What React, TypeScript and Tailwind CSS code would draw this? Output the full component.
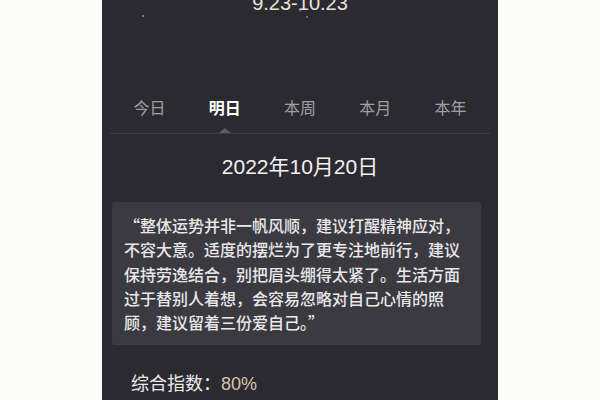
const font = { fontFamily: '"Liberation Sans", "Noto Sans CJK SC", sans-serif' };
const cjk = { fontFamily: '"Noto Sans CJK SC", sans-serif' };

const tabs = ['今日', '明日', '本周', '本月', '本年'];

const lines = [
  '“整体运势并非一帆风顺，建议打醒精神应对，',
  '不容大意。适度的摆烂为了更专注地前行，建议',
  '保持劳逸结合，别把眉头绷得太紧了。生活方面',
  '过于替别人着想，会容易忽略对自己心情的照',
  '顾，建议留着三份爱自己。”',
];

export default function App() {
  return (
    <div className="w-[600px] h-[400px] bg-[#fdfdf8] flex justify-center overflow-hidden" style={font}>
      <div className="relative w-[396px] h-[400px] bg-[#2b2a30] flex flex-col">
        {/* stars */}
        <span className="absolute left-[40px] top-[15px] w-[2px] h-[2px] rounded-full bg-[#8a8890]" />
        <span className="absolute left-[197px] top-[9px] w-[2px] h-[2px] rounded-full bg-[#a09ea6]" />
        <span className="absolute left-[204px] top-[16px] w-[2px] h-[2px] rounded-full bg-[#8a8890]" />

        <div className="mt-[-7px] h-[20px] leading-[20px] text-[20px] text-center text-[#e9e0d6]">9.23-10.23</div>

        {/* tabs */}
        <div className="mt-[82px] mx-[10px] grid grid-cols-5 text-[16px] leading-[24px]" style={cjk}>
          {tabs.map((t, i) => (
            <div key={t} className={i === 1 ? 'text-center text-white font-bold' : 'text-center text-[#a09fa4]'}>
              {t}
            </div>
          ))}
        </div>
        <div className="relative mt-[3px] mx-[8px] h-[12px]">
          <div className="absolute left-[109px] bottom-[1px] w-0 h-0 border-l-[6px] border-r-[6px] border-b-[5px] border-l-transparent border-r-transparent border-b-[#5a5960]" />
          <div className="absolute left-0 right-0 bottom-0 h-px bg-[#3e3d43]" />
        </div>

        <div className="mt-[21px] text-[21px] leading-[24px] text-center text-[#f2f2f2]">2022年10月20日</div>

        <div
          className="mt-[23px] ml-[10px] w-[369px] rounded-[3px] bg-[#3b3a40] pl-[12px] py-[11px] text-[16px] leading-[24.3px] font-medium text-[#e8e8ea]"
          style={cjk}
        >
          {lines.map((l) => (
            <div key={l} className="whitespace-nowrap">{l}</div>
          ))}
        </div>

        <div className="mt-[25px] ml-[29px] text-[18px] leading-[24px] text-[#ececec]">
          <span style={cjk}>综合指数：</span>
          <span className="text-[#d9c2a8]">80%</span>
        </div>
      </div>
    </div>
  );
}
